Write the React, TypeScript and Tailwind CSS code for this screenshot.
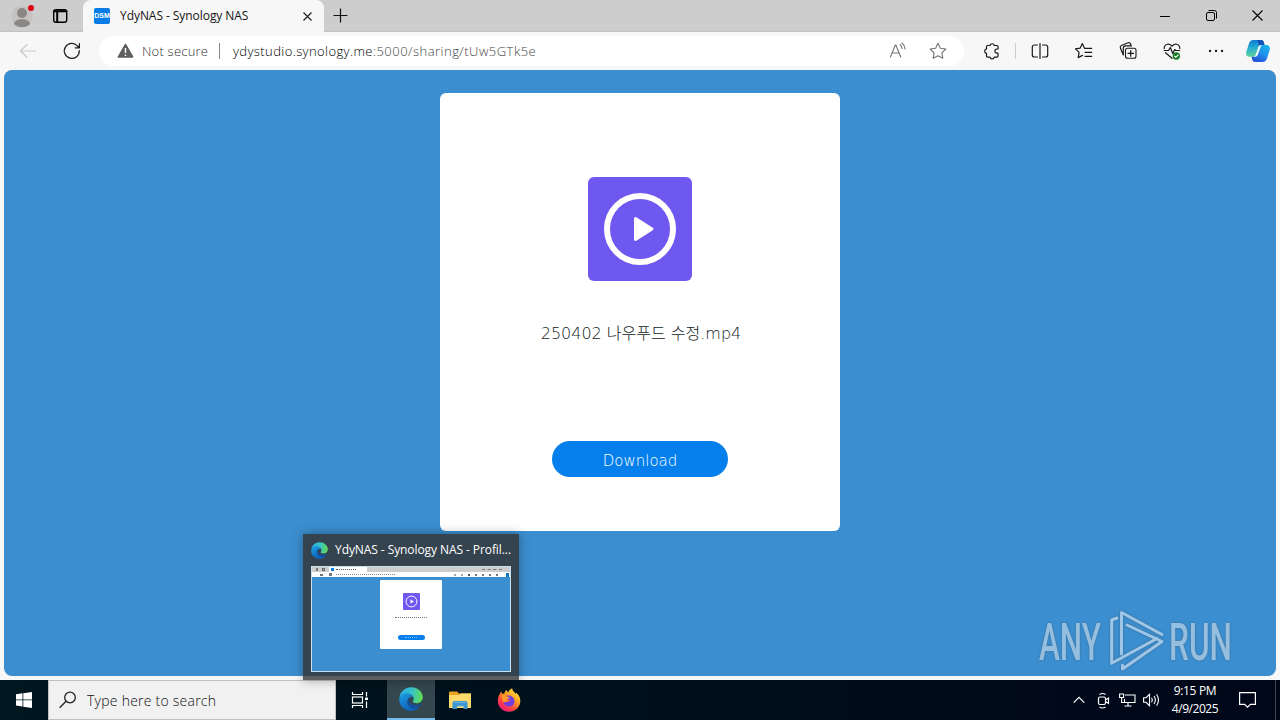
import React from "react";

const UI = "font-['Open_Sans','Noto_Sans_CJK_KR',sans-serif]";

function Edge({ size, id }: { size: number; id: string }) {
  return (
    <svg width={size} height={size} viewBox="0 0 24 24" className="shrink-0">
      <defs>
        <linearGradient id={id + "a"} x1="0" y1="0.2" x2="1" y2="0.3">
          <stop offset="0" stopColor="#2aa5e0" />
          <stop offset="0.5" stopColor="#35c1d0" />
          <stop offset="1" stopColor="#5fdc56" />
        </linearGradient>
        <linearGradient id={id + "b"} x1="0" y1="0" x2="0.5" y2="1">
          <stop offset="0" stopColor="#1b9de2" />
          <stop offset="1" stopColor="#0f5fb8" />
        </linearGradient>
      </defs>
      <path d="M0.3 11C1 4.500 6 0.200 12 0.200 19 0.200 23.800 5 23.800 10.200c0 3.800-3 6-6.300 6-2.800 0-3.800-1-3.800-1.700 0-.8 1-1.200 1-3 0-2.500-2.300-4.800-6-4.800C5 6.700 1.700 8.500.3 11z" fill={`url(#${id}a)`} />
      <path d="M.2 12C.5 8.500 4 6.300 8 6.500c3.800.2 6 1.900 6.700 3.800-1-1-4.200-.7-5.500 1.400-1.800 3-.4 7.700 4.300 9.200 2.200.7 4.500.4 6.500-.5C18 22.700 15.200 23.900 12 23.900 5.200 23.900 0 18.500.2 12z" fill={`url(#${id}b)`} />
      <path d="M9.200 11.700c-1.800 3-.4 7.700 4.300 9.200 3.500 1 6.800-.4 8.700-3.400.3-.6-.1-.7-.5-.5-4.200 2-9.200.8-11-1.800-.9-1.300-1-2.700-.1-4.500-.5.200-1 .500-1.400 1z" fill="#124f9c" />
    </svg>
  );
}

function Copilot() {
  return (
    <svg width="24" height="24" viewBox="0 0 24 24">
      <defs>
        <linearGradient id="cpa" x1="0.3" y1="0" x2="0.4" y2="1">
          <stop offset="0" stopColor="#0c78d4" />
          <stop offset="0.45" stopColor="#26acd2" />
          <stop offset="1" stopColor="#62d69b" />
        </linearGradient>
        <linearGradient id="cpb" x1="0.8" y1="0" x2="0.3" y2="1">
          <stop offset="0" stopColor="#18b3ed" />
          <stop offset="0.5" stopColor="#2090ed" />
          <stop offset="1" stopColor="#2450d4" />
        </linearGradient>
      </defs>
      <path d="M7.300 1H15c1.600 0 2.500 1 2.900 2.500L18.500 6h-3c-1.600 0-2.500.9-3 2.400l-2.400 7.200C9.600 17 8.700 17.800 7.200 17.800H3.300C.7 17.800-.3 15.700.3 13L2.900 4.700C3.700 2.300 5 1 7.300 1z" fill="url(#cpa)" />
      <path d="M16.700 23H9c-1.600 0-2.400-1-2.800-2.500l-.7-2.700h2.700c1.600 0 2.400-.8 2.900-2.300l2.500-7.200c.5-1.500 1.400-2.300 2.900-2.300h4.200c2.600 0 3.600 2.200 3 4.800l-2.600 8.500C20.300 21.700 19 23 16.700 23z" fill="url(#cpb)" />
      <path d="M15 1c1.600 0 2.500 1 2.900 2.500L18.500 6h-3c-1 0-1.800.4-2.300 1.100L11.200 1z" fill="#1353b8" />
      <path d="M12.300 8.600c.5-1.500 1.200-2.600 3-2.600L12 15.300c-.5 1.500-1.500 2.500-3 2.500z" fill="#f3fbff" />
    </svg>
  );
}

function Glyph({ children, className = "" }: { children: React.ReactNode; className?: string }) {
  return (
    <svg width="20" height="20" viewBox="0 0 20 20" fill="none" stroke="currentColor" strokeWidth="1.1" strokeLinecap="round" strokeLinejoin="round" className={"shrink-0 " + className}>
      {children}
    </svg>
  );
}

function TabStrip() {
  return (
    <div className="flex h-8 shrink-0 bg-[#cdcdcd] border-b border-[#c2c2c2]">
      <div className="flex w-[83px] shrink-0 items-center">
        <svg width="24" height="26" viewBox="0 0 24 26" className="ml-[11px] mt-px">
          <circle cx="11" cy="13" r="10.500" fill="#c5c2c0" />
          <circle cx="11" cy="10" r="5" fill="#8b8785" />
          <path d="M3 21c0-3 3.500-4.800 8-4.800s8 1.800 8 4.800c-2 2.400-5 3.300-8 3.300S5 23.400 3 21z" fill="#8b8785" />
          <circle cx="20" cy="5" r="3" fill="#dc0012" />
        </svg>
        <Glyph className="ml-[15px] text-black">
          <rect x="3.700" y="3.700" width="13" height="12.600" rx="2.200" strokeWidth="1.400" />
          <path d="M4 5.200h12.500M7.200 6v10" strokeWidth="2" />
        </Glyph>
      </div>
      <div className="flex h-8 w-[241px] shrink-0 items-center rounded-t-lg bg-[#f7f7f7] pl-[11px]">
        <span className="flex h-4 w-4 shrink-0 items-center justify-center rounded-[2px] bg-[#087ce6] font-['Liberation_Sans',sans-serif] text-[7px] font-bold text-white">DSM</span>
        <span className="ml-[10px] w-[130px] shrink-0 whitespace-nowrap text-[12px] tracking-[-0.06px] text-[#151515]">YdyNAS - Synology NAS</span>
        <svg width="9" height="9" viewBox="0 0 9 9" className="ml-[53px]"><path d="M.5.5l8 8M8.500.5l-8 8" stroke="#222" strokeWidth="1.200" /></svg>
      </div>
      <svg width="15" height="15" viewBox="0 0 15 15" className="ml-[9px] mt-[8px]"><path d="M7.500.5v14M.5 7.500h14" stroke="#111" strokeWidth="1.200" /></svg>
      <div className="ml-auto flex text-black">
        <div className="flex w-[46px] items-center justify-center"><svg width="10" height="10"><path d="M0 5.500h10" stroke="currentColor" /></svg></div>
        <div className="flex w-[46px] items-center justify-center"><svg width="11" height="11" viewBox="0 0 11 11" fill="none" stroke="currentColor"><rect x=".5" y="2.500" width="8" height="8" rx="1.500" /><path d="M2.500.5H8.500a2 2 0 0 1 2 2v6" /></svg></div>
        <div className="flex w-[46px] items-center justify-center"><svg width="11" height="11" viewBox="0 0 11 11"><path d="M.5.5l10 10M10.500.5l-10 10" stroke="currentColor" strokeWidth="1.100" /></svg></div>
      </div>
    </div>
  );
}

function Toolbar() {
  return (
    <div className="flex h-[38px] shrink-0 items-center bg-[#f7f7f7]">
      <Glyph className="ml-[18px] text-[#c9c9c9]"><path d="M17.500 10H2.500M9 3.500L2.500 10 9 16.500" /></Glyph>
      <Glyph className="ml-[24px] text-[#1c1c1c]"><path d="M17.300 9.500a7.500 7.500 0 1 1-2-4.700l2 1.900M17.400 2.500v4.300h-4.200" strokeWidth="1.200" /></Glyph>
      <div className="ml-[17px] flex h-[30px] w-[865px] shrink-0 items-center rounded-full bg-white">
        <svg width="17" height="16" viewBox="0 0 17 16" className="ml-[18px] shrink-0">
          <path d="M8.500 1.600l7 12.300h-14z" fill="#5e5e5e" stroke="#5e5e5e" strokeWidth="1.800" strokeLinejoin="round" />
          <path d="M8.500 5v5M8.500 11.500v1.500" stroke="#fff" strokeWidth="1.500" />
        </svg>
        <span className="ml-2 w-[68px] shrink-0 whitespace-nowrap pt-0.5 text-[13px] font-light tracking-[0.22px] text-[#333]">Not secure</span>
        <span className="ml-[9px] h-4 w-px shrink-0 bg-[#888]" />
        <span className="ml-[13px] whitespace-nowrap pt-0.5 text-[13px] font-light tracking-[0.48px] text-[#444]"><span className="tracking-[0.4px] text-black">ydystudio.synology.me</span>:5000/sharing/tUw5GTk5e</span>
        <Glyph className="ml-auto text-[#757575]"><path d="M2.500 16L7.300 4h.6l4.800 12M4.200 12h6.800M12 3.500a5 5 0 0 1 2 4M14 2a8 8 0 0 1 3 6" /></Glyph>
        <Glyph className="ml-5 mr-4 text-[#757575]"><path d="M10 2.300l2.400 4.900 5.400.8-3.900 3.800.9 5.400L10 14.700l-4.800 2.500.9-5.400L2.200 8l5.400-.8z" /></Glyph>
      </div>
      <Glyph className="ml-[18px] text-[#191919]"><path d="M5.500 4.500H8a2.200 2.200 0 0 1 4.300 0h2.700a1 1 0 0 1 1 1V8h-1a2.100 2.100 0 0 0 0 4.200h1v2.900a1 1 0 0 1-1 1h-2.700a2.200 2.200 0 0 1-4.300 0H5.500a1 1 0 0 1-1-1v-2.700a2.300 2.300 0 0 1 0-4.500V5.500a1 1 0 0 1 1-1z" strokeWidth="1.200" /></Glyph>
      <span className="ml-[13px] h-4 w-px shrink-0 bg-[#ccc]" />
      <div className="ml-[2px] flex shrink-0 items-center text-[#191919]">
        <div className="flex w-11 justify-center"><Glyph><path d="M7.500 4H4.300a2 2 0 0 0-2 2v8a2 2 0 0 0 2 2h3.200M12.500 4h3.200a2 2 0 0 1 2 2v8a2 2 0 0 1-2 2h-3.200M10 2.500v15" strokeWidth="1.200" /></Glyph></div>
        <div className="flex w-11 justify-center"><Glyph><path d="M10.500 7.200L8.300 2.600 6.100 7.200l-4.600.7 3.600 3.500-.9 5.200 4.300-2.200M10.500 7.300h7.200M11 11.300h6.700M11 15.300h6.700" strokeWidth="1.200" /></Glyph></div>
        <div className="flex w-11 justify-center"><Glyph><rect x="7.500" y="7.300" width="10.500" height="10" rx="2" /><path d="M12.700 9.500v5.700M9.900 12.300h5.700M5.300 14l-2.900-7a2 2 0 0 1 1-2.500l6.700-2.700a2 2 0 0 1 2.500 1.100l.7 2H7.500a2.300 2.300 0 0 0-2.200 2.300z" strokeWidth="1.200" /></Glyph></div>
        <div className="flex w-11 justify-center"><Glyph><path d="M2.200 7.500c0-4.800 5.500-5.900 7.800-2.200 2.300-3.700 7.800-2.600 7.800 2.200M2.200 9.500h4.300l1.800-3 2.500 6 1.900-4 1 1h4M3.500 11.700l6.500 5.600" strokeWidth="1.200" /><circle cx="14.300" cy="15" r="3.700" fill="#15791f" stroke="none" /><path d="M12.600 15.100l1.200 1.200 2.300-2.300" stroke="white" /></Glyph></div>
        <div className="flex w-11 justify-center"><Glyph><path d="M4 10h.1M10 10h.1M16 10h.1" strokeWidth="2.300" /></Glyph></div>
        <div className="ml-2 flex w-6 items-center justify-center"><Copilot /></div>
      </div>
    </div>
  );
}

function PlayTile({ size }: { size: number }) {
  return (
    <svg width={size} height={size} viewBox="0 0 104 104" className="shrink-0">
      <rect width="104" height="104" rx="6" fill="#6f58f0" />
      <circle cx="52" cy="52" r="33" fill="none" stroke="#fff" strokeWidth="6" />
      <path d="M47.500 41.500L64 52 47.500 62.500z" fill="#fff" stroke="#fff" strokeWidth="3" strokeLinejoin="round" />
    </svg>
  );
}

function Watermark() {
  return (
    <svg width="196" height="64" viewBox="0 0 196 64" className="absolute left-[1034px] top-[538px] overflow-visible drop-shadow-[0_0_1px_rgba(60,80,100,0.6)]">
      <g fill="#a0c6e5" fillOpacity="0.9" fontFamily="Roboto, sans-serif" fontSize="52" fontWeight="500">
        <text x="5" y="51.500" textLength="62" lengthAdjust="spacingAndGlyphs">ANY</text>
        <text x="135" y="51.500" textLength="63" lengthAdjust="spacingAndGlyphs">RUN</text>
      </g>
      <g fill="none" stroke="#9fc6e7" strokeWidth="3" strokeLinejoin="round" strokeLinecap="round">
        <path d="M87.500 46V4.500L128 26.500M93 17l35 16.500L88.500 61v-4" />
        <path d="M83 10l-5.300 2v43.300L123 30.500" />
      </g>
    </svg>
  );
}

function PreviewThumb() {
  return (
    <div className="flex h-[106px] w-[200px] flex-col overflow-hidden border border-[#cbe0ef] bg-[#3b8ecf]">
      <div className="flex h-[5px] shrink-0 items-center bg-[#cdcdcd]">
        <span className="ml-1 h-[3px] w-[2px] bg-[#777]" /><span className="ml-1 h-[3px] w-[3px] border border-[#666]" />
        <span className="ml-1 flex h-[5px] w-[38px] items-center bg-white pl-0.5"><span className="h-[3px] w-[3px] bg-[#087ce6]" /><span className="ml-0.5 w-[20px] border-t border-dotted border-[#555]" /></span>
        <span className="ml-auto mr-2 w-[20px] border-t border-dashed border-[#777]" />
      </div>
      <div className="flex h-[5px] shrink-0 items-center bg-white">
        <span className="ml-2 h-[2px] w-[3px] bg-[#777]" /><span className="ml-1.5 h-[3px] w-[3px] bg-[#777]" />
        <span className="ml-1 w-[59px] border-t border-dotted border-[#888]" />
        <span className="ml-auto flex gap-[5px] pr-2"><i className="h-[2px] w-[2px] bg-[#aaa]" /><i className="h-[2px] w-[2px] bg-[#aaa]" /><i className="h-[2px] w-[2px] bg-[#555]" /><i className="h-[2px] w-[2px] bg-[#777]" /><i className="h-[2px] w-[2px] bg-[#777]" /><i className="h-[2px] w-[2px] bg-[#777]" /><i className="h-[2px] w-[2px] bg-[#777]" /></span><span className="mr-px h-[4px] w-[3px] bg-[#1676bd]" />
      </div>
      <div className="ml-[68px] mt-[3px] flex h-[69px] w-[62px] flex-col items-center rounded-[1px] bg-white pt-[13px]">
        <PlayTile size={17} />
        <span className="mt-[7px] w-[32px] border-t border-dotted border-[#777]" />
        <span className="mt-[17px] flex h-[5px] w-[27px] items-center justify-center rounded-full bg-[#057feb]"><span className="w-3 border-t border-dotted border-[#7cc3ff]" /></span>
      </div>
    </div>
  );
}

function SharingPage() {
  return (
    <main className="flex h-[610px] shrink-0 bg-[#f8f8f8] px-1 pb-1">
      <div className="flex h-[606px] w-[1272px] justify-center rounded-lg bg-[#3b8ecf] pt-[23px]">
        <section className="flex h-[438px] w-[400px] flex-col items-center rounded-md bg-white pt-[84px] font-['DejaVu_Sans','Noto_Sans_CJK_KR',sans-serif]">
          <PlayTile size={104} />
          <h1 className="mt-[41px] h-6 whitespace-nowrap pl-0.5 text-[16px] font-extralight leading-6 text-[#101a22]">250402 나우푸드 수정.mp4</h1>
          <button className="mt-[95px] flex h-9 w-44 items-center justify-center rounded-full bg-[#057feb] pt-[4px] text-[15px] font-extralight leading-none text-white">Download</button>
        </section>
      </div>
    </main>
  );
}

function TaskPreview() {
  return (
    <div className="absolute left-[303px] top-[534px] flex h-[146px] w-[216px] flex-col border-b-4 border-[#5b5d5f] bg-[#35434f] px-2 shadow-[0_0_10px_rgba(0,0,0,0.35)]">
      <div className="flex h-8 shrink-0 items-center whitespace-nowrap text-[12px] text-white">
        <Edge size={17} id="prev" />
        <span className="ml-[7px] tracking-[-0.08px]">YdyNAS - Synology NAS - Profil...</span>
      </div>
      <PreviewThumb />
    </div>
  );
}

function Taskbar() {
  return (
    <footer className="flex h-10 shrink-0 bg-gradient-to-r from-[#00171f] to-[#000718] text-white">
      <div className="flex w-12 shrink-0 items-center justify-center">
        <svg width="16" height="16" viewBox="0 0 16 16" fill="#fff"><path d="M0 2.200L6.500 1.300v6.200H0zM7.300 1.200L16 0v7.500H7.300zM0 8.300h6.500v6.200L0 13.600zM7.300 8.300H16V16l-8.700-1.200z" /></svg>
      </div>
      <div className="flex w-72 shrink-0 items-center border border-[#c3bfbd] bg-[#f1f1f1] pl-[10px]">
        <svg width="18" height="18" viewBox="0 0 18 18" fill="none" stroke="#222" strokeWidth="1.300"><circle cx="11" cy="6.500" r="5.300" /><path d="M7 10.200L.7 16.700" /></svg>
        <span className="ml-[10px] whitespace-nowrap text-[14px] font-light tracking-[0.24px] text-[#101010]">Type here to search</span>
      </div>
      <div className="flex w-12 shrink-0 items-center justify-center">
        <svg width="18" height="16" viewBox="0 0 18 16" fill="none" stroke="#fff" strokeWidth="1.200"><path d="M1.500 0v2.500h10V0M1.500 16v-2.500h10V16M15.500 0v4.500M15.500 9.500V16" /><rect x="1.500" y="5" width="10" height="6" /><path d="M14 6.800h3" strokeWidth="2.500" /></svg>
      </div>
      <div className="ml-[3px] flex w-12 shrink-0 items-center justify-center border-b-2 border-[#76b9ed] bg-[#34474e]"><Edge size={24} id="task" /></div>
      <div className="flex w-[49px] shrink-0 items-center justify-center pl-px">
        <svg width="22" height="20" viewBox="0 0 22 20"><path d="M0 2.500Q0 1.500 1 1.500h7l2 2h11q1 0 1 1V18H0z" fill="#e8a323" /><path d="M0 5h10l2-1.500h10V18H0z" fill="#ffda6b" /><path d="M3.500 19v-6q0-2 2-2h11q2 0 2 2v6h-4v-3H8v3z" fill="#3d94d2" /><path d="M5.500 12.500h11M8 16h6.500" stroke="#69b6e8" /></svg>
      </div>
      <div className="flex w-[49px] shrink-0 items-center justify-center">
        <svg width="24" height="24" viewBox="0 0 24 24">
          <defs><linearGradient id="ff" x1=".85" y1=".1" x2=".2" y2="1"><stop offset="0" stopColor="#ffe53d" /><stop offset=".35" stopColor="#ff9b22" /><stop offset=".7" stopColor="#ff3e45" /><stop offset="1" stopColor="#e21589" /></linearGradient></defs>
          <path d="M2.500 6.500L4 3.500 5.500 6l2-.7C7.700 3.500 9 2.300 10 2c-.1 1.200.3 2 1 2.500C12 2.500 13.500 1 15.200.3c0 2 1.300 3 2.700 4.500l1 1.400V4.600C22 7 23.500 10 23.300 13.300 23 19.300 18 23.800 12 23.800S.8 19 .8 13c0-2.600.7-4.800 1.700-6.500z" fill="url(#ff)" />
          <path d="M8.300 8.200c3-1.700 9.200-.4 9.200 5.100 0 3.300-2.500 5.300-5.300 5.300-3.300 0-5.700-2.300-5.700-5.100 1.300.9 3 1.200 4.500.3 1-.6 2-.5 2-1.200 0-.8-1-1-2.300-1-1.500 0-2.400-1.600-2.400-3.400z" fill="#743de0" />
          <path d="M4.300 7.200c1.700-.8 3.700-.4 4.700.8l3.600 1.200c-.2 1.200-1.900 1.500-2.600 2.300-.4.500.1 1.500-1 2.300-1 .7-2.300.3-3 .2z" fill="#ff9829" />
        </svg>
      </div>
      <div className="ml-auto flex items-center">
        <div className="flex w-6 justify-center"><svg width="12" height="8" viewBox="0 0 12 8"><path d="M.7 6.700L6 1.400l5.300 5.300" fill="none" stroke="#fff" strokeWidth="1.200" /></svg></div>
        <div className="flex w-6 justify-center"><svg width="13" height="17" viewBox="0 0 13 17" fill="none" stroke="#fff" strokeWidth="1.200"><rect x="1.500" y="5" width="7" height="7.500" rx="1.500" /><path d="M8.500 8l3-2v5.500l-3-2M2.500 2.500q3-2 6 0M2.500 15q3 2 6 0" /></svg></div>
        <div className="flex w-6 justify-center"><svg width="17" height="14" viewBox="0 0 17 14" fill="none" stroke="#fff" strokeWidth="1.100"><path d="M6 2h10v7.500H5.500V6M9 9.500v3M5.500 13h7" /><path d="M.6 1h4v3.500h-4zM2.600 4.500v5h3" /></svg></div>
        <div className="flex w-6 justify-center"><svg width="17" height="14" viewBox="0 0 17 14" fill="none" stroke="#fff" strokeWidth="1.100"><path d="M.6 4.700h2.500L6.500 1.300v11.400L3.100 9.300H.6zM8.500 4.700q1.500 2.300 0 4.600M11 3q2.700 4 0 8M13.500 1.200q4 5.800 0 11.600" /></svg></div>
        <div className="flex w-[64px] flex-col items-center whitespace-nowrap text-[12px] leading-[18px]"><span className="tracking-[-0.35px]">9:15 PM</span><span className="tracking-[-0.45px]">4/9/2025</span></div>
        <div className="flex w-[40px] justify-center"><svg width="17" height="16" viewBox="0 0 17 16"><path d="M.6.6h15.800v11.800h-5L8.500 15.200l-2.900-2.800h-5z" fill="none" stroke="#fff" strokeWidth="1.200" /></svg></div>
        <div className="ml-[8px] mr-1 h-10 w-px bg-[#3b4651]" />
      </div>
    </footer>
  );
}

export default function App() {
  return (
    <div className={"relative flex h-[720px] w-[1280px] flex-col overflow-hidden bg-[#f8f8f8] " + UI}>
      <TabStrip />
      <Toolbar />
      <div className="relative">
        <SharingPage />
        <Watermark />
      </div>
      <Taskbar />
      <TaskPreview />
    </div>
  );
}
